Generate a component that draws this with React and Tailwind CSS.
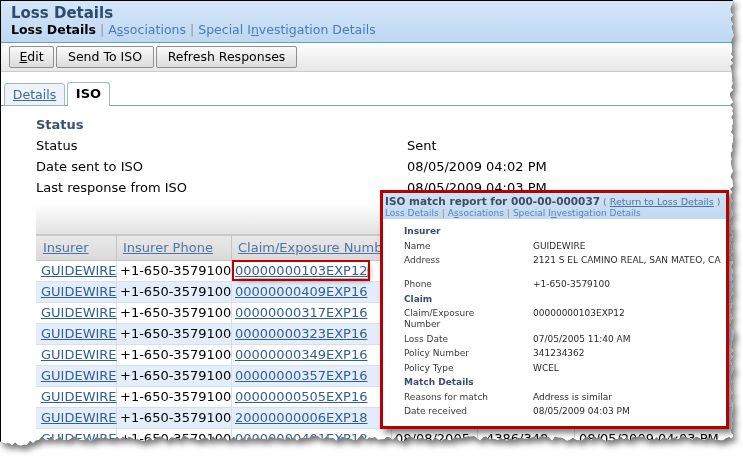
import React from 'react';

const claims = [
  '00000000103EXP12',
  '00000000409EXP16',
  '00000000317EXP16',
  '00000000323EXP16',
  '00000000349EXP16',
  '00000000357EXP16',
  '00000000505EXP16',
  '20000000006EXP18',
  '00000000401EXP18',
];

// jagged "torn paper" outline on the right and bottom edges
const tornEdge = () => {
  let s = 11;
  const rnd = () => {
    s = (s * 9301 + 49297) % 233280;
    return s / 233280;
  };
  const pts = ['0px 0px', '733px 0px'];
  for (let y = 0; y <= 436; y += 3) pts.push(`${730 + rnd() * 4}px ${y}px`);
  for (let x = 732; x >= 0; x -= 3) {
    const base = x < 35 ? 441 : 436;
    pts.push(`${x}px ${base + rnd() * 5}px`);
  }
  return `polygon(${pts.join(',')})`;
};

const Sep = () => <span className="text-[#8a96a4] px-[4px]">|</span>;

const PopRow = ({ label, value, className = '' }) => (
  <div className={`flex leading-[11px] py-[1.75px] ${className}`}>
    <div className="w-[129px] shrink-0 pr-[30px] text-[#3a3a3a]">{label}</div>
    <div className="whitespace-nowrap text-[#2a2a2a]">{value}</div>
  </div>
);

const PopSection = ({ children }) => (
  <div className="leading-[11px] py-[1.75px] font-bold text-[#3b4e6b]">{children}</div>
);

const App = () => {
  const last = claims.length - 1;
  return (
    <div className="w-[743px] h-[456px] bg-white overflow-hidden">
      <div className="w-[737px] h-[447px] [filter:drop-shadow(0_0_0.6px_rgba(0,0,0,0.9))_drop-shadow(3px_4px_3px_rgba(0,0,0,0.55))]">
        <div
          className="relative w-[737px] h-[447px] bg-white border-l border-t border-black overflow-hidden font-['DejaVu_Sans',sans-serif] text-black"
          style={{ clipPath: tornEdge() }}
        >
          {/* Header */}
          <div className="h-[42px] bg-linear-to-b from-[#d4e6f9] to-[#bed8f2] border-b border-[#5c9fd3] pl-[10px] pt-[3px]">
            <div className="text-[15px] leading-[18px] font-bold text-[#2e4a6c]">Loss Details</div>
            <div className="text-[12.5px] leading-[16px] whitespace-nowrap">
              <span className="font-bold text-black">Loss Details</span>
              <Sep />
              <span className="text-[#4b7cb6]">A<u>s</u>sociations</span>
              <Sep />
              <span className="text-[#4b7cb6]">Special I<u>n</u>vestigation Details</span>
            </div>
          </div>

          {/* Toolbar */}
          <div className="h-[29px] bg-linear-to-b from-white to-[#e6e6e6] border-b border-[#cbcbcb] flex items-start gap-[2px] pl-[8px] pt-[3px]">
            <button className="h-[22px] w-[45px] rounded-[2px] border border-[#8f8f8f] bg-linear-to-b from-[#fafafa] to-[#dcdcdc] text-[12.5px] leading-[20px]">
              <u>E</u>dit
            </button>
            <button className="h-[22px] w-[98px] rounded-[2px] border border-[#8f8f8f] bg-linear-to-b from-[#fafafa] to-[#dcdcdc] text-[12.5px] leading-[20px]">
              Send To ISO
            </button>
            <button className="h-[22px] w-[141px] rounded-[2px] border border-[#8f8f8f] bg-linear-to-b from-[#fafafa] to-[#dcdcdc] text-[12.5px] leading-[20px]">
              Refresh Responses
            </button>
          </div>

          {/* Tabs */}
          <div className="h-[34px] flex items-end gap-[2px] pl-[3px] border-b border-[#7f9fbe]">
            <div className="h-[23px] w-[61px] -mb-px border border-[#9fb6cc] rounded-t-[3px] bg-[#eef3f8] text-center text-[12.5px] leading-[21px]">
              <span className="underline text-[#3a6aa6]">Details</span>
            </div>
            <div className="h-[24px] w-[43px] -mb-px border border-b-0 border-[#9fb6cc] rounded-t-[3px] bg-white text-center text-[13px] leading-[22px] font-bold">
              ISO
            </div>
          </div>

          {/* Content */}
          <div className="pl-[35px] pt-[8px] text-[13px]">
            <div className="h-[21px] leading-[21px] font-bold text-[#3a5070]">Status</div>
            {[
              ['Status', 'Sent'],
              ['Date sent to ISO', '08/05/2009 04:02 PM'],
              ['Last response from ISO', '08/05/2009 04:03 PM'],
            ].map(([k, v]) => (
              <div key={k} className="flex h-[21px] leading-[21px]">
                <div className="w-[371px]">{k}</div>
                <div>{v}</div>
              </div>
            ))}

            {/* list toolbar */}
            <div className="mt-[6px] h-[32px] bg-linear-to-b from-white to-[#e2e2e2] border-b-2 border-[#c9c9c9]" />

            {/* table */}
            <div className="whitespace-nowrap">
              <div className="flex h-[25px] leading-[24px] bg-linear-to-b from-[#e9e9e9] to-[#dadada] border-b border-[#c6c6c6] text-[#4d76a6]">
                <div className="w-[81px] pl-[7px] border-r border-[#c4c4c4] underline">Insurer</div>
                <div className="w-[115px] pl-[6px] border-r border-[#c4c4c4] underline">Insurer Phone</div>
                <div className="w-[160px] pl-[6px] border-r border-[#c4c4c4] underline">Claim/Exposure Numbe</div>
                <div className="w-[86px] border-r border-[#c4c4c4]" />
                <div className="w-[97px] border-r border-[#c4c4c4]" />
                <div className="w-[160px]" />
              </div>
              {claims.map((c, i) => (
                <div
                  key={c}
                  className={`flex h-[21px] leading-[20px] border-b border-[#d3e0ee] ${i % 2 ? 'bg-[#e3eefa]' : 'bg-white'}`}
                >
                  <div className="w-[81px] pl-[5px] border-r border-[#d3e0ee]">
                    <span className="underline text-[#2f5e9a]">GUIDEWIRE</span>
                  </div>
                  <div className="w-[115px] pl-[3px] border-r border-[#d3e0ee]">+1-650-3579100</div>
                  <div className="w-[160px] pl-[3px] border-r border-[#d3e0ee]">
                    <span
                      className={`underline text-[#2f5e9a] ${i === 0 ? 'outline-2 outline-offset-[1px] outline-[#c00000] shadow-[3px_3px_5px_rgba(0,0,0,0.35)]' : ''}`}
                    >
                      {c}
                    </span>
                  </div>
                  <div className="w-[86px] pl-[3px] border-r border-[#d3e0ee]">{i === last ? '08/08/2005' : ''}</div>
                  <div className="w-[97px] pl-[8px] border-r border-[#d3e0ee]">{i === last ? '4386/348' : ''}</div>
                  <div className="w-[160px] pl-[4px]">{i === last ? '08/05/2009 04:03 PM' : ''}</div>
                </div>
              ))}
            </div>
          </div>

          {/* ISO match report popup */}
          <div className="absolute left-[379px] top-[189px] w-[349px] h-[239px] border-[3px] border-[#b80000] bg-white shadow-[4px_4px_6px_rgba(0,0,0,0.5)] overflow-hidden">
            <div className="h-[26px] bg-linear-to-b from-[#cfe2f6] to-[#c1d9f1] pl-[2px] pt-[2px] whitespace-nowrap">
              <div className="leading-[12px] text-[10.5px]">
                <span className="font-bold text-[#3b4d66]">ISO match report for 000-00-000037</span>
                <span className="text-[9.5px] text-[#6a7a8c]">
                  {' '}( <span className="underline text-[#4a74a8]">Return to Loss Details</span> )
                </span>
              </div>
              <div className="leading-[11px] text-[9px] mt-[-0.5px]">
                <span className="text-[#5a84b8]">Loss Details</span>
                <span className="text-[#8a96a4] px-[3px]">|</span>
                <span className="text-[#5a84b8]">A<u>s</u>sociations</span>
                <span className="text-[#8a96a4] px-[3px]">|</span>
                <span className="text-[#5a84b8]">Special I<u>n</u>vestigation Details</span>
              </div>
            </div>
            <div className="pl-[21px] pt-[5.5px] text-[9px]">
              <PopSection>Insurer</PopSection>
              <PopRow label="Name" value="GUIDEWIRE" />
              <PopRow label="Address" value="2121 S EL CAMINO REAL, SAN MATEO, CA" className="mb-[9.5px]" />
              <PopRow label="Phone" value="+1-650-3579100" />
              <PopSection>Claim</PopSection>
              <PopRow label="Claim/Exposure Number" value="00000000103EXP12" />
              <PopRow label="Loss Date" value="07/05/2005 11:40 AM" />
              <PopRow label="Policy Number" value="341234362" />
              <PopRow label="Policy Type" value="WCEL" />
              <PopSection>Match Details</PopSection>
              <PopRow label="Reasons for match" value="Address is similar" />
              <PopRow label="Date received" value="08/05/2009 04:03 PM" />
            </div>
          </div>
        </div>
      </div>
    </div>
  );
};

export default App;
